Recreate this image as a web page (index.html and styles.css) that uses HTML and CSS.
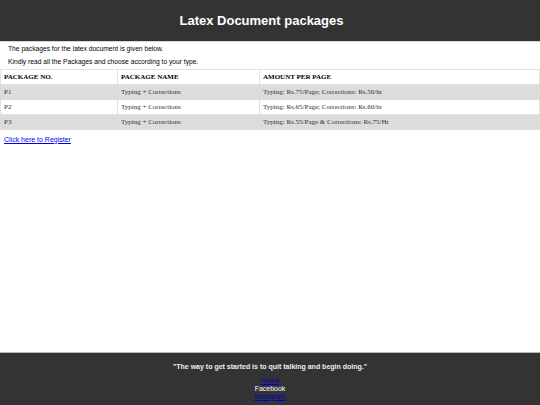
FILE: index.html
```html
<!DOCTYPE html>
<html>
<head>
<meta charset="utf-8">
<title>Latex Document packages</title>
<link rel="stylesheet" href="styles.css">
</head>
<body>
<header class="top">
  <h1 class="title">Latex Document packages</h1>
</header>
<main class="main">
  <div class="intro">
    <p>The packages for the latex document is given below.</p>
    <p>Kindly read all the Packages and choose according to your type.</p>
  </div>
  <table class="packages">
    <thead>
      <tr>
        <th class="c1">PACKAGE NO.</th>
        <th class="c2">PACKAGE NAME</th>
        <th class="c3">AMOUNT PER PAGE</th>
      </tr>
    </thead>
    <tbody>
      <tr class="shade">
        <td>P1</td>
        <td>Typing + Corrections</td>
        <td>Typing: Rs.75/Page; Corrections: Rs.50/hr</td>
      </tr>
      <tr>
        <td>P2</td>
        <td>Typing + Corrections</td>
        <td>Typing: Rs.65/Page; Corrections: Rs.60/hr</td>
      </tr>
      <tr class="shade">
        <td>P3</td>
        <td>Typing + Corrections</td>
        <td>Typing: Rs.55/Page &amp; Corrections: Rs.75/Hr</td>
      </tr>
    </tbody>
  </table>
  <div class="register"><a href="#">Click here to Register</a></div>
</main>
<footer class="foot">
  <p class="quote">"The way to get started is to quit talking and begin doing."</p>
  <div class="links">
    <a href="#">Home</a>
    <span class="plain">Facebook</span>
    <a href="#">Instagram</a>
  </div>
</footer>
</body>
</html>
```
FILE: styles.css
```css
html, body {
  margin: 0;
  padding: 0;
}
body {
  font-family: "Liberation Sans", Arial, sans-serif;
  font-size: 6.7px;
  color: #000;
  background: #fff;
  min-height: 405px;
  display: flex;
  flex-direction: column;
}
.top {
  background: #333;
  height: 41px;
  border-bottom: 1px solid #d6d6d6;
  display: flex;
  align-items: center;
  justify-content: center;
  padding-right: 17px;
}
.title {
  margin: 0;
  color: #fff;
  font-size: 13px;
  font-weight: bold;
  line-height: 1;
}
.main {
  flex: 1;
}
.intro {
  padding: 0 8px;
}
.intro p {
  margin: 0;
  line-height: 13.3px;
}
.packages {
  width: 100%;
  border-collapse: collapse;
  border: 1px solid #e6e6e6;
  font-family: "Liberation Serif", "Times New Roman", serif;
  font-size: 7px;
}
.packages th,
.packages td {
  height: 15px;
  padding: 0 3px;
  text-align: left;
  border: 1px solid #e2e2e2;
  box-sizing: border-box;
  color: #333;
}
.packages th {
  font-weight: bold;
  background: #fff;
  color: #000;
}
.c1 { width: 117px; }
.c2 { width: 142px; }
.shade td {
  background: #dcdcdc;
  border-color: #dcdcdc;
}
.register {
  padding: 5px 4px 0;
  font-size: 7px;
  line-height: 9px;
}
a {
  color: #0000ee;
}
.foot {
  background: #333;
  border-top: 1px solid #b8b8b8;
  height: 53px;
  text-align: center;
  color: #fff;
  padding-top: 10px;
  box-sizing: border-box;
  overflow: hidden;
}
.quote {
  margin: 0;
  font-weight: bold;
  font-size: 7px;
  line-height: 8px;
  color: #eee;
}
.links {
  margin-top: 6px;
  display: flex;
  flex-direction: column;
  align-items: center;
  font-size: 7px;
  line-height: 7.8px;
}
.links a {
  color: #0000cc;
}
.plain {
  color: #fff;
}
```
